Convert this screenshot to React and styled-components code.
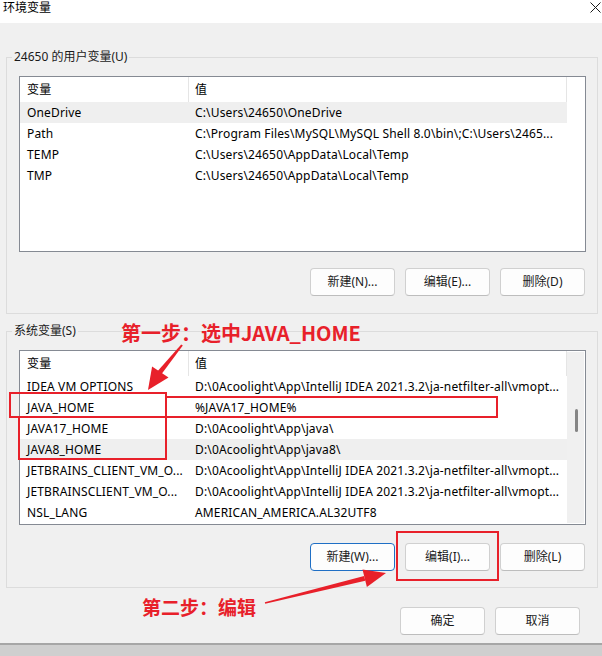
import styled, { createGlobalStyle } from "styled-components";

const userVars = [
   { name: "OneDrive", value: "C:\\Users\\24650\\OneDrive", selected: true },
   { name: "Path", value: "C:\\Program Files\\MySQL\\MySQL Shell 8.0\\bin\\;C:\\Users\\2465..." },
   { name: "TEMP", value: "C:\\Users\\24650\\AppData\\Local\\Temp" },
   { name: "TMP", value: "C:\\Users\\24650\\AppData\\Local\\Temp" },
];

const systemVars = [
   { name: "IDEA VM OPTIONS", value: "D:\\0Acoolight\\App\\IntelliJ IDEA 2021.3.2\\ja-netfilter-all\\vmopt..." },
   { name: "JAVA_HOME", value: "%JAVA17_HOME%" },
   { name: "JAVA17_HOME", value: "D:\\0Acoolight\\App\\java\\" },
   { name: "JAVA8_HOME", value: "D:\\0Acoolight\\App\\java8\\", selected: true },
   { name: "JETBRAINS_CLIENT_VM_O...", value: "D:\\0Acoolight\\App\\IntelliJ IDEA 2021.3.2\\ja-netfilter-all\\vmopt..." },
   { name: "JETBRAINSCLIENT_VM_O...", value: "D:\\0Acoolight\\App\\IntelliJ IDEA 2021.3.2\\ja-netfilter-all\\vmopt..." },
   { name: "NSL_LANG", value: "AMERICAN_AMERICA.AL32UTF8" },
];

function VarList({ rows, height, scroll }) {
   return (
      <ListBox $h={height}>
         <ListMain>
            <HeaderRow>
               <Cell $first>变量</Cell>
               <Cell>值</Cell>
            </HeaderRow>
            {rows.map((r) => (
               <Row key={r.name} $selected={r.selected}>
                  <Cell $first>{r.name}</Cell>
                  <Cell>{r.value}</Cell>
               </Row>
            ))}
         </ListMain>
         <ScrollStrip>
            {scroll && (
               <Track>
                  <Thumb />
               </Track>
            )}
         </ScrollStrip>
      </ListBox>
   );
}

export default function App() {
   return (
      <>
         <GlobalStyle />
         <Window>
            <TitleBar>
               <Title>环境变量</Title>
               <svg width="11" height="11" viewBox="0 0 11 11">
                  <path d="M0.5 0.5 L10.5 10.5 M10.5 0.5 L0.5 10.5" stroke="#1a1a1a" strokeWidth="1" />
               </svg>
            </TitleBar>

            <Body>
               <Group>
                  <Legend>24650 的用户变量(U)</Legend>
                  <GroupInner $bottom={17}>
                     <VarList rows={userVars} height={176} />
                     <ButtonRow $top={16}>
                        <Button>新建(N)...</Button>
                        <Button>编辑(E)...</Button>
                        <Button>删除(D)</Button>
                     </ButtonRow>
                  </GroupInner>
               </Group>

               <Group $top={9}>
                  <Legend>系统变量(S)</Legend>
                  <GroupInner $bottom={16}>
                     <VarList rows={systemVars} height={175} scroll />
                     <ButtonRow $top={18}>
                        <Button $focused>新建(W)...</Button>
                        <Button>编辑(I)...</Button>
                        <Button>删除(L)</Button>
                     </ButtonRow>
                  </GroupInner>
               </Group>

               <Footer>
                  <Button>确定</Button>
                  <Button>取消</Button>
               </Footer>
            </Body>

            <BottomEdge />

            {/* red hand-drawn annotations on top of the dialog */}
            <Overlay width="602" height="656" viewBox="0 0 602 656">
               <g fill="none" stroke="#e8202a" strokeWidth="2">
                  <path d="M10 393 H166 V459 H19 V417" />
                  <path d="M10 392 V418" />
                  <path d="M166 397 H497 V417 H10" />
                  <rect x="397" y="532" width="101" height="48" />
               </g>
               <g fill="#e8202a">
                  <polygon points="182.8,345.6 181.2,344.4 157.3,371.4 161.4,374.2" />
                  <polygon points="148,390 152.1,366.4 168.5,377.6" />
                  <polygon points="265.2,603.7 264.8,602.3 364.1,575.9 365.3,580.7" />
                  <polygon points="386,573 362.5,569.6 366.9,587" />
               </g>
            </Overlay>
            <Note $x={121} $y={323} $size={20}>第一步：选中JAVA_HOME</Note>
            <Note $x={142} $y={597} $size={19}>第二步：编辑</Note>
         </Window>
      </>
   );
}

const GlobalStyle = createGlobalStyle`
   html, body {
      margin: 0;
      padding: 0;
      background: #f0f0f0;
   }
   body {
      font-family: "Noto Sans", "Noto Sans CJK SC", sans-serif;
      font-size: 12px;
      color: #000;
   }
`;

const Window = styled.div`
   position: relative;
   width: 602px;
   height: 656px;
   background: #f0f0f0;
   display: flex;
   flex-direction: column;
   overflow: hidden;
`;

const TitleBar = styled.div`
   height: 23px;
   flex-shrink: 0;
   background: #fff;
   display: flex;
   align-items: flex-start;
   justify-content: space-between;
   padding: 0 1px 0 3px;

   svg {
      margin-top: 2px;
   }
`;

const Title = styled.span`
   font-size: 12px;
   line-height: 16px;
`;

const Body = styled.div`
   flex: 1;
   display: flex;
   flex-direction: column;
   padding: 26px 4px 0 6px;
`;

const Group = styled.fieldset`
   margin: ${(p) => p.$top || 0}px 0 0 0;
   padding: 0;
   min-width: 0;
   border: 1px solid #dcdcdc;
`;

const Legend = styled.legend`
   margin-left: 5px;
   padding: 0 2px;
   font-size: 12px;
   line-height: 16px;
   color: #1a1a1a;
`;

const GroupInner = styled.div`
   padding: 11px 11px ${(p) => p.$bottom}px 12px;
`;

const ListBox = styled.div`
   height: ${(p) => p.$h}px;
   box-sizing: border-box;
   border: 1px solid #858a93;
   background: #fff;
   display: flex;
   overflow: hidden;
`;

const ListMain = styled.div`
   flex: 1;
   min-width: 0;
   display: flex;
   flex-direction: column;
`;

const HeaderRow = styled.div`
   display: grid;
   grid-template-columns: 169px 1fr;
   height: 25px;
   flex-shrink: 0;
   border-right: 1px solid #e5e5e5;
`;

const Row = styled.div`
   display: grid;
   grid-template-columns: 169px 1fr;
   height: 21px;
   flex-shrink: 0;
   background: ${(p) => (p.$selected ? "#efefef" : "transparent")};
`;

const Cell = styled.div`
   display: flex;
   align-items: center;
   box-sizing: border-box;
   padding-left: ${(p) => (p.$first ? 7 : 6)}px;
   border-right: ${(p) => (p.$first ? "1px solid #e5e5e5" : "none")};
   white-space: nowrap;
   overflow: hidden;
   line-height: 16px;
   letter-spacing: 0.15px;

   ${Row} & {
      border-right-color: transparent;
   }
`;

const ScrollStrip = styled.div`
   width: 18px;
   flex-shrink: 0;
   box-sizing: border-box;
   padding: 1px 1px 1px 0;
   background: #fff;
`;

const Track = styled.div`
   height: 100%;
   background: #f0f0f0;
   display: flex;
   flex-direction: column;
`;

const Thumb = styled.div`
   width: 3px;
   height: 23px;
   margin: 57px 0 0 8px;
   border-radius: 2px;
   background: #858585;
`;

const ButtonRow = styled.div`
   display: flex;
   justify-content: flex-end;
   gap: 10px;
   margin-top: ${(p) => p.$top}px;
   padding-right: 1px;
`;

const Button = styled.button`
   width: 85px;
   height: 28px;
   box-sizing: border-box;
   padding: 0;
   border: 1px solid ${(p) => (p.$focused ? "#1f6fc5" : "#d0d0d0")};
   border-bottom-color: ${(p) => (p.$focused ? "#1f6fc5" : "#bdbdbd")};
   border-radius: 4px;
   background: #fdfdfd;
   font-family: "Noto Sans", "Noto Sans CJK SC", sans-serif;
   font-size: 12px;
   line-height: 16px;
   color: #1a1a1a;
`;

const Footer = styled.div`
   display: flex;
   justify-content: flex-end;
   gap: 10px;
   margin-top: 19px;
   padding-right: 18px;
`;

const BottomEdge = styled.div`
   height: 11px;
   flex-shrink: 0;
   border-top: 2px solid #a6a6a6;
   background: #cfcfcf;
`;

const Overlay = styled.svg`
   position: absolute;
   left: 0;
   top: 0;
   pointer-events: none;
`;

const Note = styled.span`
   position: absolute;
   left: ${(p) => p.$x}px;
   top: ${(p) => p.$y}px;
   font-family: "Noto Sans CJK SC", sans-serif;
   font-weight: 700;
   font-size: ${(p) => p.$size}px;
   line-height: ${(p) => p.$size}px;
   color: #e8202a;
   white-space: nowrap;
`;
